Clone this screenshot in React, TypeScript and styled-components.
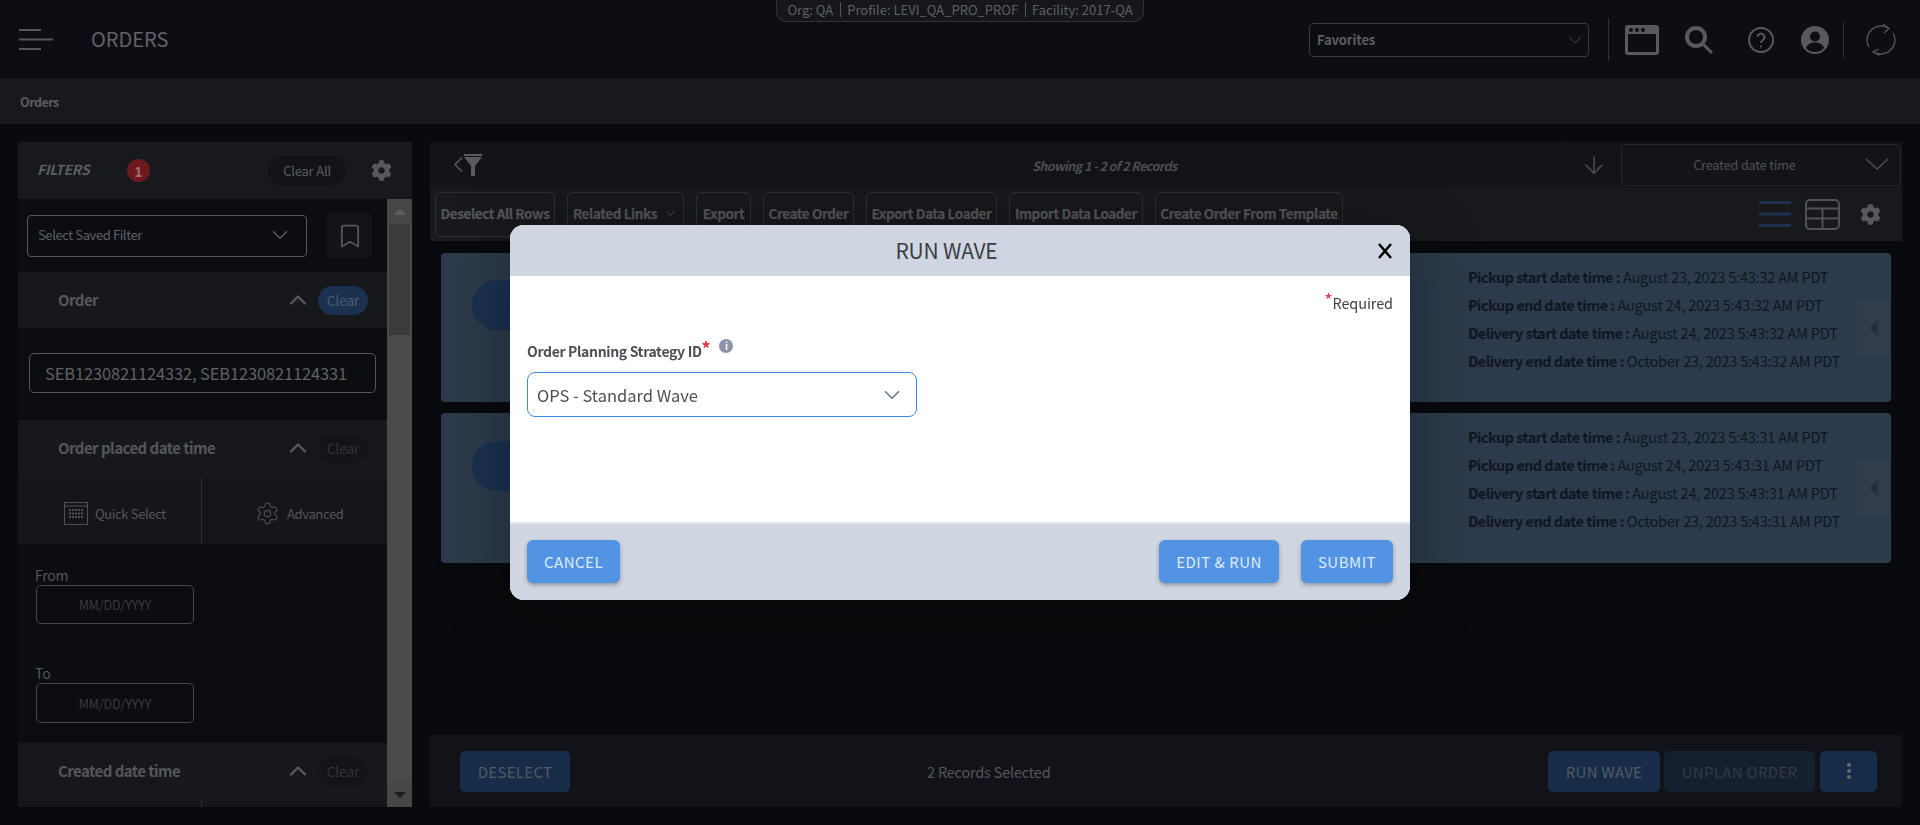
import React from 'react';
import styled, { createGlobalStyle } from 'styled-components';
import { ChevronDown, ChevronUp, Bookmark, Settings, ArrowDown } from 'lucide-react';
import { FaCog } from 'react-icons/fa';

const FONT = '"Noto Sans CJK SC", "Noto Sans", sans-serif';

const Global = createGlobalStyle`
  html, body { margin: 0; padding: 0; background: #090a0d; }
  body { font-family: ${FONT}; overflow: hidden; }
  * { box-sizing: border-box; }
`;

const Page = styled.div`
  width: 1920px; height: 825px; display: flex; flex-direction: column; background: #090a0d; overflow: hidden;
`;
const Header = styled.header`
  height: 79px; flex: none; display: grid; grid-template-columns: 776px 368px 1fr; background: #0d0e13;
`;
const HeaderLeft = styled.div`
  display: flex; align-items: center; padding-left: 19px; gap: 38px;
`;
const PageTitle = styled.h1`
  margin: 0 0 2px; font-size: 20px; line-height: 26px; font-weight: 400; color: #616265;
`;
const OrgPill = styled.div`
  height: 22px; border: 1px solid #303236; border-top: none; border-radius: 0 0 10px 10px; background: #15171b;
  display: flex; align-items: center; justify-content: center; font-size: 13px; line-height: 20px; color: #5f6063;
  white-space: nowrap; padding-bottom: 2px;
`;
const OrgPart = styled.span<{ $line?: boolean }>`
  padding: 0 6.500px; ${p => p.$line ? 'border-left: 1px solid #55565a;' : ''} line-height: 15px;
`;
const HeaderRight = styled.div`
  display: flex; align-items: center; justify-content: flex-end; padding-right: 24px;
`;
const Favorites = styled.div`
  width: 280px; height: 34px; border: 1px solid #3a3b3f; border-radius: 4px; display: flex; align-items: center;
  justify-content: space-between; padding: 0 2px 0 7px; font-size: 13px; font-weight: 700; color: #5c5d60; margin-right: 19px;
  letter-spacing: -0.1px;
`;
const VLine = styled.div<{ $h: number; $mr: number }>`
  width: 1px; height: ${p => p.$h}px; background: #303236; margin-right: ${p => p.$mr}px;
`;
const IconSlot = styled.span<{ $mr: number }>`
  display: flex; margin-right: ${p => p.$mr}px;
`;
const Crumbs = styled.div`
  height: 45px; flex: none; background: #17191d; padding-left: 20px; display: flex; align-items: center;
  font-size: 12.500px; font-weight: 700; color: #5c5d60; letter-spacing: -0.5px;
`;
const Main = styled.main`
  height: 665px; flex: none; margin-top: 18px; padding: 0 18px; display: flex; gap: 18px;
`;
const Sidebar = styled.aside`
  width: 394px; height: 665px; display: flex; flex-direction: column; overflow: hidden;
`;
const FilterHead = styled.div`
  height: 57px; flex: none; background: #17191d; display: flex; align-items: center; padding-left: 19px;
`;
const FilterTitle = styled.span`
  font-size: 14px; font-weight: 700; font-style: italic; color: #5c5d60; width: 90px; letter-spacing: -0.3px; margin-bottom: 3px;
`;
const Badge = styled.span`
  width: 23px; height: 23px; border-radius: 50%; background: #6d1a1e; color: #a56a6c; font-size: 14px; font-weight: 700;
  display: flex; align-items: center; justify-content: center; margin-right: 118px;
`;
const ClearAll = styled.span`
  width: 78px; height: 30px; border-radius: 15px; background: #111317; color: #5c5d60; font-size: 13px; letter-spacing: -0.2px;
  display: flex; align-items: center; justify-content: center; margin-right: 25px;
`;
const SideBody = styled.div`
  flex: 1; display: flex; min-height: 0; background: #0b0d11;
`;
const SideColumn = styled.div`
  width: 369px; flex: none; display: flex; flex-direction: column;
`;
const SavedRow = styled.div`
  height: 73px; flex: none; display: flex; align-items: center; padding-left: 9px; gap: 20px;
`;
const SavedSelect = styled.div`
  width: 280px; height: 42px; border: 1px solid #56575a; border-radius: 4px; display: flex; align-items: center;
  justify-content: space-between; padding: 0 13px 2px 10px; font-size: 13px; color: #5f6063; letter-spacing: -0.4px;
`;
const BookmarkBtn = styled.div`
  width: 45px; height: 45px; background: #121418; border-radius: 4px; display: flex; align-items: center; justify-content: center;
`;
const SectionHead = styled.div`
  height: 56px; flex: none; background: #16181c; display: flex; align-items: center; padding: 0 19px 0 40px;
`;
const SectionTitle = styled.span`
  flex: 1; font-size: 15px; font-weight: 700; color: #55565a; letter-spacing: -0.55px; margin-bottom: 2px;
`;
const ClearPill = styled.span<{ $on?: boolean }>`
  width: 50px; height: 29px; border-radius: 15px; margin-left: 6px; font-size: 13.500px; display: flex; align-items: center;
  justify-content: center; background: ${p => p.$on ? '#1a3150' : '#121418'}; color: ${p => p.$on ? '#4f5d6e' : '#333539'};
`;
const OrderBlock = styled.div`
  height: 92px; flex: none; padding: 25px 0 0 11px;
`;
const OrderInput = styled.div`
  width: 347px; height: 40px; border: 1px solid #56575a; border-radius: 5px; display: flex; align-items: center;
  padding-left: 15px; font-size: 16.500px; letter-spacing: -0.15px; color: #606164; white-space: nowrap;
`;
const QuickRow = styled.div<{ $h: number }>`
  height: ${p => p.$h}px; flex: none; background: #14161a; display: flex; padding-top: 2px;
`;
const QuickCell = styled.div<{ $line?: boolean; $pl: number; $w: number }>`
  width: ${p => p.$w}px; display: flex; align-items: center; gap: 7px; padding: 5px 0 0 ${p => p.$pl}px; font-size: 13px; color: #55565a; letter-spacing: -0.35px;
  ${p => p.$line ? 'border-right: 1px solid #2d2f33;' : ''}
`;
const DateBlock = styled.div`
  height: 199px; flex: none; padding: 21px 0 0 18px;
`;
const DateLabel = styled.div`
  font-size: 14px; line-height: 20px; height: 20px; color: #55565a; margin-left: -1px; letter-spacing: -0.2px;
`;
const DateInput = styled.div<{ $mb: number; $h: number }>`
  width: 158px; height: ${p => p.$h}px; border: 1px solid #47484b; border-radius: 5px; display: flex; align-items: center; justify-content: center;
  font-size: 12.500px; color: #3a3b3e; margin-bottom: ${p => p.$mb}px; letter-spacing: -0.1px;
`;
const ScrollBar = styled.div`
  width: 25px; flex: none; background: #4a4a4a; display: flex; flex-direction: column;
`;
const ScrollBtn = styled.div<{ $down?: boolean }>`
  height: 25px; flex: none; display: flex; align-items: center; justify-content: center; background: #464646;
  &::after {
    content: ''; border-left: 6px solid transparent; border-right: 6px solid transparent;
    ${p => p.$down ? 'border-top: 6px solid #1f1f1f;' : 'border-bottom: 6px solid #5e5e5e;'}
  }
`;
const ScrollThumb = styled.div`
  height: 111px; flex: none; margin: 0 2px 0 2px; background: #3b3b3b;
`;
const ScrollFill = styled.div`
  flex: 1;
`;
const Content = styled.section`
  width: 1472px; height: 665px; display: flex; flex-direction: column;
`;
const TopRow = styled.div`
  height: 45px; flex: none; background: #121418; display: flex; align-items: center; padding-left: 24px;
`;
const Showing = styled.span`
  margin: 2px 0 0 550px; width: 533px; font-size: 12.500px; font-weight: 700; font-style: italic; color: #4d4e52; letter-spacing: -0.55px;
`;
const SortArrow = styled.div`
  width: 56px; height: 45px; border-left: 1px solid #16181c; display: flex; align-items: center; justify-content: center; flex: none;
`;
const SortSelect = styled.div`
  width: 280px; height: 42px; flex: none; border: 1px solid #25272b; border-radius: 5px; display: flex; align-items: center;
  font-size: 12.500px; color: #515255; padding: 0 11px 0 0; margin-right: 1px;
`;
const SortText = styled.span`
  flex: 1; text-align: center; padding-left: 2px; letter-spacing: -0.1px;
`;
const Toolbar = styled.div`
  height: 54px; flex: none; background: #17191d; display: flex; align-items: center; padding-left: 5px; gap: 12px;
`;
const ToolBtn = styled.div<{ $w: number }>`
  width: ${p => p.$w}px; height: 45px; border: 1px solid #2d2f33; border-radius: 5px; display: flex; align-items: center; justify-content: center;
  gap: 6px; font-size: 13.500px; font-weight: 700; color: #55565a; white-space: nowrap; letter-spacing: -0.4px; flex: none; padding-bottom: 2px;
  -webkit-text-stroke: 0.25px #55565a;
`;
const ToolRight = styled.div`
  margin-left: auto; display: flex; align-items: center; padding-right: 21px;
`;
const CardList = styled.div`
  flex: 1; padding: 12px 11px 0; display: flex; flex-direction: column; gap: 11px;
`;
const Card = styled.article<{ $h: number }>`
  height: ${p => p.$h}px; background: #2c3a4b; border-radius: 4px; display: flex; flex: none;
`;
const CardPill = styled.div<{ $mt: number }>`
  width: 150px; height: 50px; margin: ${p => p.$mt}px 0 0 31px; border-radius: 25px; background: #1a3150; flex: none;
`;
const Dates = styled.div`
  margin-left: auto; padding-top: 10px; width: 389px; flex: none;
`;
const DateLine = styled.div`
  font-size: 14.500px; line-height: 28px; height: 28px; color: #10161f; white-space: nowrap; letter-spacing: -0.2px;
  b { font-weight: 700; letter-spacing: -0.55px; }
`;
const CardTab = styled.div`
  width: 34px; height: 56px; align-self: center; background: #323d4c; flex: none; display: flex; align-items: center; padding-left: 12px;
  &::after {
    content: ''; border-top: 8px solid transparent; border-bottom: 8px solid transparent; border-right: 9px solid #262f3d;
  }
`;
const BottomBar = styled.footer`
  height: 72px; flex: none; background: #121318; display: flex; align-items: center; padding: 0 25px 0 30px;
`;
const DarkBtn = styled.div<{ $w: number; $dim?: boolean; $ml?: number }>`
  width: ${p => p.$w}px; height: 41px; flex: none; border-radius: 5px; display: flex; align-items: center; justify-content: center; flex-direction: column;
  margin-left: ${p => p.$ml ?? 0}px; font-size: 15px; letter-spacing: .3px; gap: 2px; white-space: nowrap;
  background: ${p => p.$dim ? '#14202f' : '#172c48'}; color: ${p => p.$dim ? '#353a41' : '#525a65'};
`;
const Dot = styled.i`
  width: 4px; height: 4px; border-radius: 50%; background: #65686d; display: block;
`;
const Selected = styled.span`
  margin-left: 357px; width: 621px; font-size: 14.500px; color: #55565a; flex: none; letter-spacing: -0.2px;
`;
const Overlay = styled.div`
  position: fixed; inset: 0; display: flex; align-items: center; justify-content: center;
`;
const Modal = styled.div`
  width: 900px; height: 375px; border-radius: 14px; overflow: hidden; background: #fff; display: flex; flex-direction: column;
  box-shadow: 0 6px 70px rgba(0, 0, 0, .32);
`;
const ModalHead = styled.div`
  height: 51px; flex: none; background: #cfd6e2; display: flex; align-items: center; padding: 0 17px 0 0;
`;
const ModalTitle = styled.h2`
  flex: 1; margin: 0 0 2px; padding-left: 6px; text-align: center; font-size: 21px; line-height: 30px; font-weight: 400; color: #3a3d42; letter-spacing: -0.2px;
`;
const ModalBody = styled.div`
  flex: 1; padding: 17px 17px 0; display: flex; flex-direction: column;
`;
const RequiredNote = styled.div`
  text-align: right; font-size: 14.500px; line-height: 20px; height: 20px; color: #3c3f44; letter-spacing: -0.1px;
`;
const Star = styled.span<{ $bold?: boolean }>`
  color: #e2333a; font-size: 18px; line-height: 10px; position: relative; top: ${p => p.$bold ? '2px' : '-2px'}; font-weight: ${p => p.$bold ? 700 : 400};
`;
const FieldLabel = styled.label`
  margin-top: 28px; font-size: 14px; line-height: 20px; height: 20px; font-weight: 700; color: #4b4e54; display: flex; letter-spacing: -0.35px;
`;
const InfoDot = styled.span`
  width: 14px; height: 14px; border-radius: 50%; background: #8c95a8; color: #fff; margin: -2px 0 0 9px; font-size: 10px; line-height: 14px; text-align: center; font-weight: 700;
`;
const StrategySelect = styled.div`
  margin-top: 11px; width: 390px; height: 45px; border: 1px solid #3a8ae8; border-radius: 8px; display: flex; align-items: center;
  justify-content: space-between; padding: 0 11px 0 9px; font-size: 16.500px; color: #4c4e52;
`;
const ModalFoot = styled.div`
  height: 78px; flex: none; background: #cfd6e2; border-top: 2px solid #e7e9ed; display: flex; justify-content: space-between; padding: 16px 17px 0;
`;
const FootGroup = styled.div`
  display: flex; gap: 22px;
`;
const ModalBtn = styled.button<{ $w: number }>`
  width: ${p => p.$w}px; height: 43px; border: none; border-radius: 6px; background: #5294e3; color: #dfeaf8; font-family: ${FONT}; font-size: 15px;
  letter-spacing: .5px; box-shadow: 0 2px 4px rgba(0, 0, 0, .3); padding: 0;
`;

const HamburgerIcon = () => (
  <svg width="34" height="22" viewBox="0 0 34 22" fill="none" stroke="#56575b" strokeWidth="2">
    <path d="M0 1h22M0 10.500h34M0 20h22" />
  </svg>
);
const BrowserIcon = () => (
  <svg width="34" height="30" viewBox="0 0 34 30">
    <path fill="#58595c" fillRule="evenodd" d="M3 0h28a3 3 0 0 1 3 3v24a3 3 0 0 1-3 3H3a3 3 0 0 1-3-3V3a3 3 0 0 1 3-3zm0 9v17a1 1 0 0 0 1 1h26a1 1 0 0 0 1-1V9z" />
    <circle cx="6" cy="5" r="2" fill="#0d0e13" /><circle cx="12" cy="5" r="2" fill="#0d0e13" /><circle cx="18" cy="5" r="2" fill="#0d0e13" />
  </svg>
);
const SearchIcon = () => (
  <svg width="28" height="28" viewBox="0 0 28 28" fill="none" stroke="#58595c">
    <circle cx="11" cy="11" r="9" strokeWidth="4" />
    <path d="M17 17l10 10" strokeWidth="3" />
  </svg>
);
const HelpIcon = () => (
  <svg width="26" height="26" viewBox="0 0 26 26" fill="none" stroke="#58595c" strokeWidth="2">
    <circle cx="13" cy="13" r="12" />
    <path d="M9.500 10a3.500 3.500 0 1 1 5.500 3c-1.300.9-2 1.500-2 3" />
    <circle cx="13" cy="19.500" r="1" fill="#58595c" stroke="none" />
  </svg>
);
const UserIcon = () => (
  <svg width="28" height="28" viewBox="0 0 28 28">
    <circle cx="14" cy="14" r="14" fill="#58595c" />
    <circle cx="14" cy="10.500" r="5" fill="#0d0e13" />
    <path fill="#0d0e13" d="M5 22c1.500-4 5-5.500 9-5.500s7.500 1.500 9 5.500c-2 2.500-5.500 4-9 4s-7-1.500-9-4z" />
  </svg>
);
const SyncIcon = () => (
  <svg width="30" height="32" viewBox="0 0 30 32" fill="none" stroke="#56575b" strokeWidth="1.300">
    <path d="M2.900 23A14 14 0 0 1 23 4.500M27.100 9A14 14 0 0 1 7 27.500" />
    <path d="M17 0l6 4.500-5 4.500M13 25l-6 2.500 6.500 4" />
  </svg>
);
const FunnelIcon = () => (
  <svg width="28" height="22" viewBox="0 0 28 22">
    <path d="M8 3.500L1 10.500 8 17.500" fill="none" stroke="#5a5b5e" strokeWidth="1.500" />
    <path fill="#5a5b5e" d="M10 0h18v2H10zM10 3h18l-7 9v10h-4V12z" />
  </svg>
);
const WideChevron = () => (
  <svg width="24" height="13" viewBox="0 0 24 13" fill="none" stroke="#505154" strokeWidth="1.300">
    <path d="M1 1l11 10L23 1" />
  </svg>
);
const ListIcon = () => (
  <svg width="32" height="26" viewBox="0 0 32 26" fill="#1c3350">
    <rect width="32" height="3" /><rect y="11.500" width="32" height="3" /><rect y="23" width="32" height="3" />
  </svg>
);
const TableIcon = () => (
  <svg width="35" height="31" viewBox="0 0 35 31" fill="none" stroke="#505154" strokeWidth="2">
    <rect x="1" y="1" width="33" height="29" rx="4" />
    <path d="M1 9.500h33M1 19.500h33M17.500 9.500v20" />
  </svg>
);
const CalendarIcon = () => (
  <svg width="24" height="23" viewBox="0 0 24 23" fill="none" stroke="#505154">
    <rect x=".5" y=".5" width="23" height="22" />
    <path d="M0 4h24" />
    <path stroke="#505154" strokeWidth="2" strokeDasharray="2 1" d="M5 8h14M5 11.500h14M5 15h14" />
  </svg>
);
const CloseIcon = () => (
  <svg width="16" height="16" viewBox="0 0 16 16" fill="none" stroke="#000" strokeWidth="2.500">
    <path d="M2 1l12 14M14 1L2 15" />
  </svg>
);

const tools: [string, number][] = [
  ['Deselect All Rows', 120], ['Related Links', 117], ['Export', 55], ['Create Order', 91],
  ['Export Data Loader', 131], ['Import Data Loader', 134], ['Create Order From Template', 188],
];

const DateRows = ({ s }: { s: string }) => (
  <Dates>
    <DateLine><b>Pickup start date time :</b> August 23, 2023 5:43:{s} AM PDT</DateLine>
    <DateLine><b>Pickup end date time :</b> August 24, 2023 5:43:{s} AM PDT</DateLine>
    <DateLine><b>Delivery start date time :</b> August 24, 2023 5:43:{s} AM PDT</DateLine>
    <DateLine><b>Delivery end date time :</b> October 23, 2023 5:43:{s} AM PDT</DateLine>
  </Dates>
);

const Section = ({ title, on }: { title: string; on?: boolean }) => (
  <SectionHead>
    <SectionTitle>{title}</SectionTitle>
    <ChevronUp size={28} color="#58595c" strokeWidth={2} />
    <ClearPill $on={on}>Clear</ClearPill>
  </SectionHead>
);

export default function App() {
  return (
    <>
      <Global />
      <Page>
        <Header>
          <HeaderLeft>
            <HamburgerIcon />
            <PageTitle>ORDERS</PageTitle>
          </HeaderLeft>
          <OrgPill>
            <OrgPart>Org: QA</OrgPart>
            <OrgPart $line>Profile: LEVI_QA_PRO_PROF</OrgPart>
            <OrgPart $line>Facility: 2017-QA</OrgPart>
          </OrgPill>
          <HeaderRight>
            <Favorites>Favorites<ChevronDown size={22} color="#505154" strokeWidth={1} /></Favorites>
            <VLine $h={43} $mr={16} />
            <IconSlot $mr={26}><BrowserIcon /></IconSlot>
            <IconSlot $mr={35}><SearchIcon /></IconSlot>
            <IconSlot $mr={27}><HelpIcon /></IconSlot>
            <IconSlot $mr={14}><UserIcon /></IconSlot>
            <VLine $h={36} $mr={22} />
            <SyncIcon />
          </HeaderRight>
        </Header>
        <Crumbs>Orders</Crumbs>
        <Main>
          <Sidebar>
            <FilterHead>
              <FilterTitle>FILTERS</FilterTitle>
              <Badge>1</Badge>
              <ClearAll>Clear All</ClearAll>
              <FaCog size={21} color="#58595c" />
            </FilterHead>
            <SideBody>
              <SideColumn>
                <SavedRow>
                  <SavedSelect>Select Saved Filter<ChevronDown size={26} color="#5f6063" strokeWidth={1.3} /></SavedSelect>
                  <BookmarkBtn><Bookmark size={28} color="#55565a" strokeWidth={1.5} /></BookmarkBtn>
                </SavedRow>
                <Section title="Order" on />
                <OrderBlock>
                  <OrderInput>SEB1230821124332, SEB1230821124331</OrderInput>
                </OrderBlock>
                <Section title="Order placed date time" />
                <QuickRow $h={68}>
                  <QuickCell $line $w={184} $pl={46}><CalendarIcon />Quick Select</QuickCell>
                  <QuickCell $w={185} $pl={53}><Settings size={25} strokeWidth={1} color="#505154" />Advanced</QuickCell>
                </QuickRow>
                <DateBlock>
                  <DateLabel>From</DateLabel>
                  <DateInput $h={39} $mb={39}>MM/DD/YYYY</DateInput>
                  <DateLabel>To</DateLabel>
                  <DateInput $h={40} $mb={0}>MM/DD/YYYY</DateInput>
                </DateBlock>
                <Section title="Created date time" />
                <QuickRow $h={8}>
                  <QuickCell $line $w={184} $pl={46} />
                </QuickRow>
              </SideColumn>
              <ScrollBar>
                <ScrollBtn />
                <ScrollThumb />
                <ScrollFill />
                <ScrollBtn $down />
              </ScrollBar>
            </SideBody>
          </Sidebar>
          <Content>
            <TopRow>
              <FunnelIcon />
              <Showing>Showing 1 - 2 of 2 Records</Showing>
              <SortArrow><ArrowDown size={28} color="#505154" strokeWidth={1.2} /></SortArrow>
              <SortSelect>
                <SortText>Created date time</SortText>
                <WideChevron />
              </SortSelect>
            </TopRow>
            <Toolbar>
              {tools.map(([label, w]) => (
                <ToolBtn key={label} $w={w}>
                  {label}
                  {label === 'Related Links' && <ChevronDown size={15} color="#55565a" strokeWidth={1.5} />}
                </ToolBtn>
              ))}
              <ToolRight>
                <IconSlot $mr={14}><ListIcon /></IconSlot>
                <IconSlot $mr={20}><TableIcon /></IconSlot>
                <FaCog size={21} color="#58595c" />
              </ToolRight>
            </Toolbar>
            <CardList>
              <Card $h={149}><CardPill $mt={27} /><DateRows s="32" /><CardTab /></Card>
              <Card $h={150}><CardPill $mt={28} /><DateRows s="31" /><CardTab /></Card>
            </CardList>
            <BottomBar>
              <DarkBtn $w={110}>DESELECT</DarkBtn>
              <Selected>2 Records Selected</Selected>
              <DarkBtn $w={112}>RUN WAVE</DarkBtn>
              <DarkBtn $w={151} $dim $ml={4}>UNPLAN ORDER</DarkBtn>
              <DarkBtn $w={57} $ml={5}><Dot /><Dot /><Dot /></DarkBtn>
            </BottomBar>
          </Content>
        </Main>
        <Overlay>
          <Modal>
            <ModalHead>
              <ModalTitle>RUN WAVE</ModalTitle>
              <CloseIcon />
            </ModalHead>
            <ModalBody>
              <RequiredNote><Star>*</Star>Required</RequiredNote>
              <FieldLabel>Order Planning Strategy ID<Star $bold>*</Star><InfoDot>i</InfoDot></FieldLabel>
              <StrategySelect>OPS - Standard Wave<ChevronDown size={26} color="#6f7b8c" strokeWidth={1.5} /></StrategySelect>
            </ModalBody>
            <ModalFoot>
              <ModalBtn $w={93}>CANCEL</ModalBtn>
              <FootGroup>
                <ModalBtn $w={120}>EDIT &amp; RUN</ModalBtn>
                <ModalBtn $w={92}>SUBMIT</ModalBtn>
              </FootGroup>
            </ModalFoot>
          </Modal>
        </Overlay>
      </Page>
    </>
  );
}
